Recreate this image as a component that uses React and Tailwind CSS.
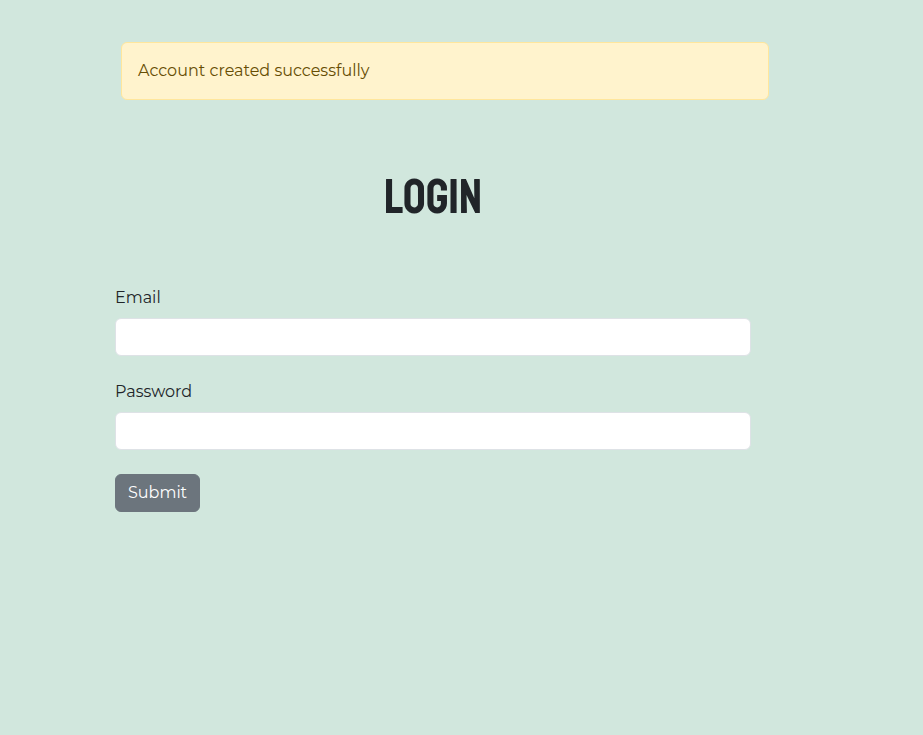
function Field({ id, label, type }) {
  return (
    <div className="mb-6">
      <label htmlFor={id} className="mb-2 block">
        {label}
      </label>
      <input
        id={id}
        name={id}
        type={type}
        className="block h-[38px] w-full rounded-md border border-[#dee2e6] bg-white px-3 text-base outline-none focus:border-[#86b7fe]"
      />
    </div>
  );
}

export default function App() {
  return (
    <main className="min-h-screen bg-[#d1e7dd] pt-[42px] font-['Montserrat','Inter',sans-serif] text-base text-[#212529]">
      <div
        role="alert"
        className="ml-[121px] mr-[154px] rounded-md border border-[#ffe69c] bg-[#fff3cd] p-4 text-[#664d03]"
      >
        Account created successfully
      </div>
      <div className="ml-[115px] mr-[172px] pt-[68px]">
        <h1 className="mb-[60px] text-center font-['Staatliches','Bebas_Neue','Liberation_Sans',sans-serif] text-[50px] leading-[58px] font-normal">
          LOGIN
        </h1>
        <form onSubmit={(event) => event.preventDefault()}>
          <Field id="email" label="Email" type="email" />
          <Field id="password" label="Password" type="password" />
          <button
            type="submit"
            className="h-[38px] rounded-md border border-[#6c757d] bg-[#6c757d] px-3 text-white hover:bg-[#5c636a]"
          >
            Submit
          </button>
        </form>
      </div>
    </main>
  );
}
